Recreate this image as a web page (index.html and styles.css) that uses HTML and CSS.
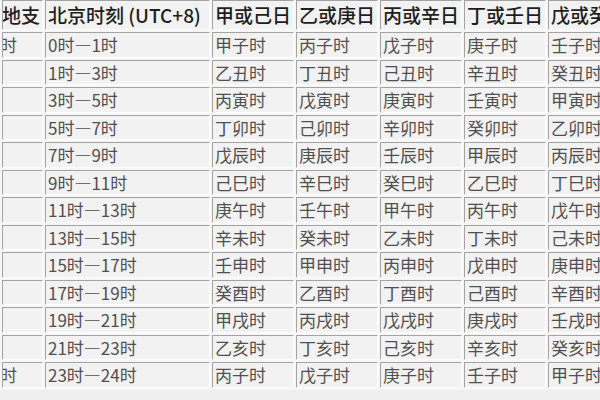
FILE: index.html
```html
<!DOCTYPE html>
<html lang="zh-CN">
<head>
<meta charset="utf-8">
<title>时辰对照表</title>
<link rel="stylesheet" href="styles.css">
</head>
<body>
<div class="frame">
<table class="hours">
<thead>
<tr>
<th class="c1">地支</th>
<th class="c2">北京时刻 (UTC+8)</th>
<th class="cd">甲或己日</th>
<th class="cd">乙或庚日</th>
<th class="cd">丙或辛日</th>
<th class="cd">丁或壬日</th>
<th class="cd">戊或癸日</th>
</tr>
</thead>
<tbody>
<tr><td class="c1"><span class="cut">时</span></td><td>0时—1时</td><td>甲子时</td><td>丙子时</td><td>戊子时</td><td>庚子时</td><td>壬子时</td></tr>
<tr><td class="c1"></td><td>1时—3时</td><td>乙丑时</td><td>丁丑时</td><td>己丑时</td><td>辛丑时</td><td>癸丑时</td></tr>
<tr><td class="c1"></td><td>3时—5时</td><td>丙寅时</td><td>戊寅时</td><td>庚寅时</td><td>壬寅时</td><td>甲寅时</td></tr>
<tr><td class="c1"></td><td>5时—7时</td><td>丁卯时</td><td>己卯时</td><td>辛卯时</td><td>癸卯时</td><td>乙卯时</td></tr>
<tr><td class="c1"></td><td>7时—9时</td><td>戊辰时</td><td>庚辰时</td><td>壬辰时</td><td>甲辰时</td><td>丙辰时</td></tr>
<tr><td class="c1"></td><td>9时—11时</td><td>己巳时</td><td>辛巳时</td><td>癸巳时</td><td>乙巳时</td><td>丁巳时</td></tr>
<tr><td class="c1"></td><td>11时—13时</td><td>庚午时</td><td>壬午时</td><td>甲午时</td><td>丙午时</td><td>戊午时</td></tr>
<tr><td class="c1"></td><td>13时—15时</td><td>辛未时</td><td>癸未时</td><td>乙未时</td><td>丁未时</td><td>己未时</td></tr>
<tr><td class="c1"></td><td>15时—17时</td><td>壬申时</td><td>甲申时</td><td>丙申时</td><td>戊申时</td><td>庚申时</td></tr>
<tr><td class="c1"></td><td>17时—19时</td><td>癸酉时</td><td>乙酉时</td><td>丁酉时</td><td>己酉时</td><td>辛酉时</td></tr>
<tr><td class="c1"></td><td>19时—21时</td><td>甲戌时</td><td>丙戌时</td><td>戊戌时</td><td>庚戌时</td><td>壬戌时</td></tr>
<tr><td class="c1"></td><td>21时—23时</td><td>乙亥时</td><td>丁亥时</td><td>己亥时</td><td>辛亥时</td><td>癸亥时</td></tr>
<tr><td class="c1"><span class="cut">时</span></td><td>23时—24时</td><td>丙子时</td><td>戊子时</td><td>庚子时</td><td>壬子时</td><td>甲子时</td></tr>
</tbody>
</table>
</div>
</body>
</html>
```
FILE: styles.css
```css
html, body {
  margin: 0;
  padding: 0;
  background: #efefef;
  overflow: hidden;
}
.frame {
  width: 600px;
  height: 400px;
  overflow: hidden;
}
.hours {
  border-collapse: separate;
  border-spacing: 2px;
  table-layout: fixed;
  width: 632px;
  margin-top: -2px;
  font-family: "Noto Sans CJK SC", "Liberation Sans", sans-serif;
  background: #f6f6f6;
}
.hours th,
.hours td {
  box-sizing: border-box;
  border-style: solid;
  border-width: 1px;
  border-color: #a3a3a3 #ffffff #ffffff #a3a3a3;
  background: #f2f2f2;
  text-align: left;
  vertical-align: middle;
  white-space: nowrap;
  overflow: hidden;
  padding: 0 0 0 2px;
}
.hours th {
  height: 30px;
  font-size: 19px;
  font-weight: 500;
  color: #1e1e1e;
  line-height: 28px;
}
.hours td {
  height: 25.5px;
  font-size: 17px;
  font-weight: 400;
  color: #505050;
  line-height: 23px;
}
.hours .c1 { width: 41px; padding-left: 0; }
.hours .c2 { width: 165px; }
.hours .cd { width: 82px; }
.hours th.c1 { text-indent: -1px; }
.cut {
  display: inline-block;
  margin-left: -3px;
}
```
